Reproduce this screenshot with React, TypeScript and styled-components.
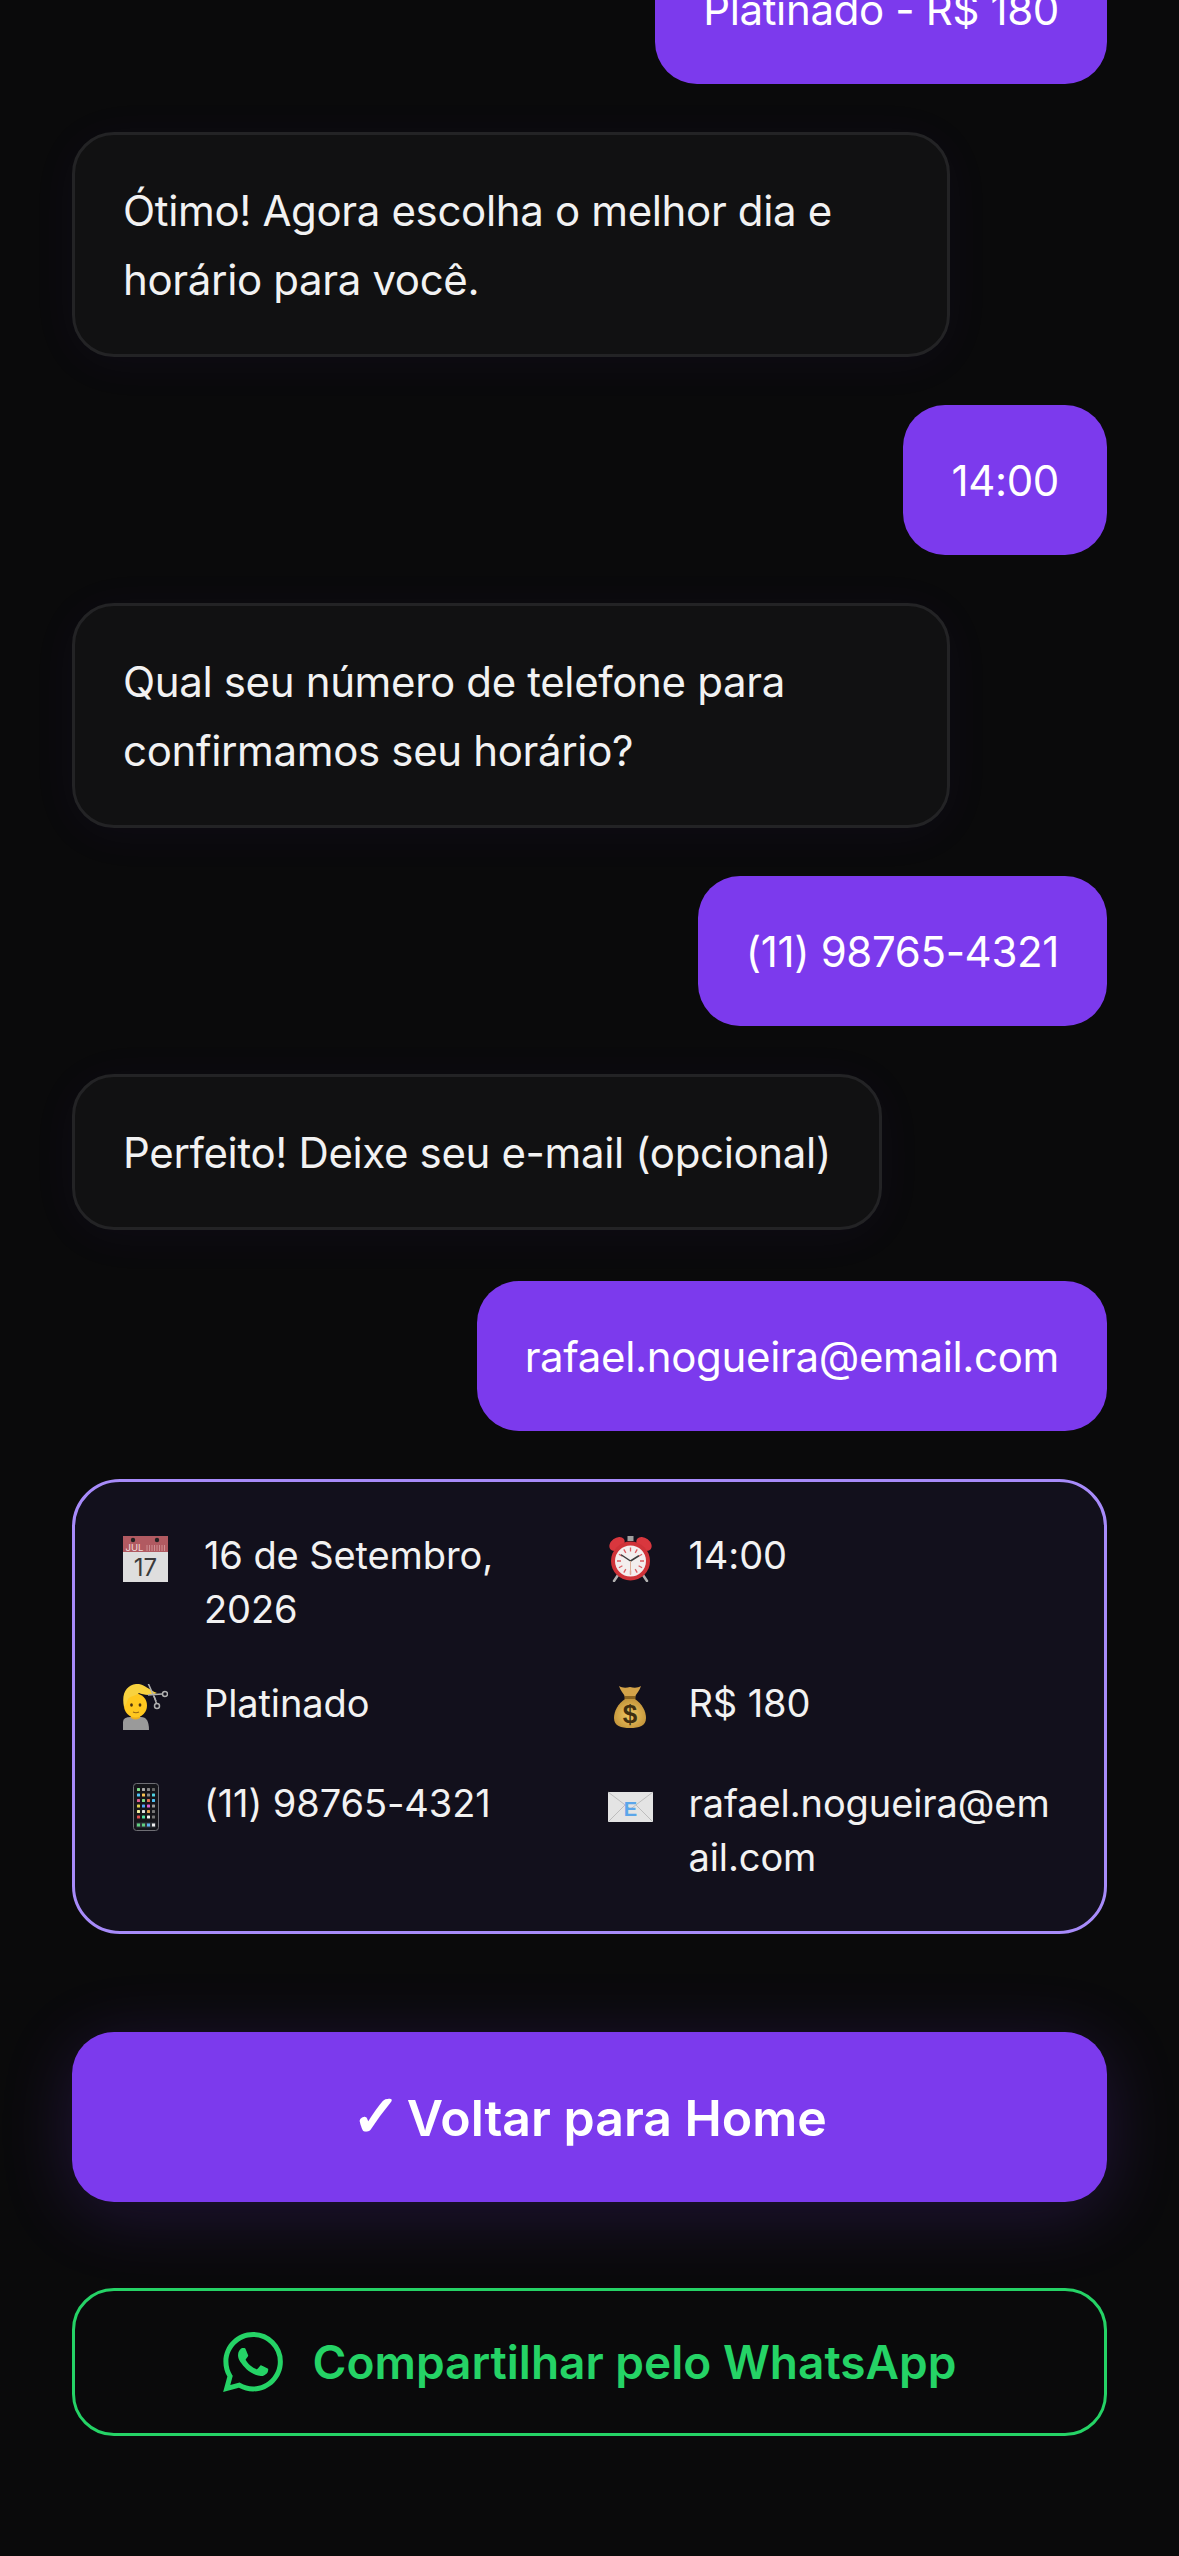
import React from "react";
import styled, { createGlobalStyle } from "styled-components";
import { SiWhatsapp } from "react-icons/si";

const Global = createGlobalStyle`
  html, body { margin: 0; padding: 0; background: #0a0a0b; }
  * { box-sizing: border-box; }
`;

const Page = styled.main`
  height: 2556px;
  overflow: hidden;
  display: flex;
  flex-direction: column;
  justify-content: flex-end;
  padding: 0 72px 120px;
  background: #0a0a0b;
  font-family: Inter, "Liberation Sans", sans-serif;
  color: #f5f5f5;
`;

const Chat = styled.section`
  display: flex;
  flex-direction: column;
  gap: 48px;
  flex-shrink: 0;
`;

const UserBubble = styled.div<{ $spaced?: boolean }>`
  align-self: flex-end;
  flex-shrink: 0;
  margin-top: ${(p) => (p.$spaced ? "3px" : "0")};
  background: #7c3aed;
  color: #fff;
  border-radius: 42px;
  padding: 40.5px 48px;
  font-size: 42px;
  font-weight: 380;
  line-height: 69px;
  letter-spacing: -0.35px;
  white-space: nowrap;
`;

const BotBubble = styled.div`
  align-self: flex-start;
  flex-shrink: 0;
  max-width: 878px;
  background: #111112;
  border: 3px solid #232325;
  border-radius: 42px;
  padding: 40.5px 48px;
  font-size: 42px;
  font-weight: 380;
  line-height: 69px;
  letter-spacing: -0.35px;
  color: #f2f2f2;
  box-shadow: 0 6px 48px rgba(124, 58, 237, 0.05);
`;

const SummaryCard = styled.section`
  background: #12101c;
  border: 3px solid #a78bfa;
  border-radius: 48px;
  padding: 46px 48px 47px;
  display: grid;
  grid-template-columns: 1fr 1fr;
  column-gap: 36px;
  row-gap: 40px;
`;

const InfoItem = styled.div`
  display: flex;
  gap: 36px;
  align-items: flex-start;
  min-height: 60px;
`;

const IconBox = styled.span`
  flex: 0 0 45px;
  width: 45px;
  height: 46px;
  margin-top: 8px;
  display: flex;
  align-items: center;
  justify-content: center;
  svg { display: block; }
`;

const InfoText = styled.span`
  font-size: 38px;
  font-weight: 380;
  line-height: 54px;
  letter-spacing: -0.1px;
  color: #f2f2f2;
  overflow-wrap: anywhere;
`;

const PrimaryButton = styled.button`
  margin-top: 98px;
  flex-shrink: 0;
  height: 170px;
  border: 0;
  border-radius: 42px;
  background: #7c3aed;
  color: #fff;
  font: 600 50px Inter, "Liberation Sans", sans-serif;
  box-shadow: 0 12px 72px rgba(124, 58, 237, 0.2);
`;

const Check = styled.span`
  font-family: "DejaVu Sans", sans-serif;
  font-size: 58px;
  line-height: 1;
  font-weight: 400;
  -webkit-text-stroke: 2px #fff;
  margin-right: 6px;
`;

const ShareButton = styled.button`
  margin-top: 86px;
  flex-shrink: 0;
  height: 148px;
  border: 3px solid #25d366;
  border-radius: 42px;
  background: transparent;
  color: #25d366;
  font: 600 46px Inter, "Liberation Sans", sans-serif;
  display: flex;
  align-items: center;
  justify-content: center;
  gap: 30px;
`;

const CalendarIcon = () => (
  <svg width="45" height="46" viewBox="0 0 45 46">
    <rect x="0" y="0" width="45" height="46" fill="#dedede" />
    <rect x="0" y="0" width="45" height="16" fill="#b15a61" />
    <circle cx="10" cy="4" r="2.2" fill="#222" />
    <circle cx="34" cy="4" r="2.2" fill="#222" />
    <text x="2.5" y="15" fontFamily="Inter, sans-serif" fontSize="9.5" fill="#f2dcdc">JUL</text>
    <path d="M24 9v6M26.5 9v6M29 9v6M31.5 9v6M34 9v6M36.5 9v6M39 9v6M41.5 9v6" stroke="#cf8f93" strokeWidth="1" />
    <text x="22.5" y="40" textAnchor="middle" fontFamily="Inter, sans-serif" fontSize="24" fill="#3a3a3a">17</text>
  </svg>
);

const BarberIcon = () => (
  <svg width="45" height="46" viewBox="0 0 45 46">
    <path d="M0 46v-8q0-5 8-5h10q8 0 8 13z" fill="#9a9a9a" />
    <path d="M8 30h9v4q-4.500 3-9 0z" fill="#eeb01e" />
    <ellipse cx="12.5" cy="21.5" rx="11.5" ry="12" fill="#ffc81f" />
    <path d="M1 23C-2 9 4 1 13 0c7-1 11 5 21 9-6 3-14 2-18 0-3 3-9 3-11 6-1 3-2 6-4 8z" fill="#f8d23f" />
    <ellipse cx="8.5" cy="21" rx="1.4" ry="1.8" fill="#4a3210" />
    <ellipse cx="17" cy="21" rx="1.4" ry="1.8" fill="#4a3210" />
    <path d="M10 28q3 1.500 6 0" stroke="#9a6a12" strokeWidth="1.2" fill="none" />
    <g stroke="#b0b0b0" fill="none" strokeWidth="1.5">
      <path d="M25-1l8 18M25 11l14-1" />
      <circle cx="42" cy="10" r="2.5" />
      <circle cx="34" cy="22" r="2.5" />
      <path d="M31 12l2.500 7.500" />
    </g>
  </svg>
);

const PhoneIcon = () => {
  const colors = ["#7fe08a", "#aaa", "#888", "#666", "#4fc3f7", "#f7c04f", "#888", "#4fd1e0", "#e05f8f", "#7fe08a", "#e0724f", "#4fc3f7", "#e0d04f", "#4fa3f7", "#e05fd0", "#999", "#f0f0a0", "#e0e0e0", "#e0a04f", "#777", "#e04f4f", "#4fe0a0", "#eee", "#777"];
  return (
    <svg width="26" height="48" viewBox="0 0 26 48">
      <rect x="0.5" y="0.5" width="25" height="47" rx="3" fill="#15151a" stroke="#6e6e74" />
      {colors.map((c, i) => (
        <rect key={i} x={4 + (i % 4) * 5} y={5 + Math.floor(i / 4) * 5.5} width="3" height="3" rx="0.6" fill={c} />
      ))}
      <rect x="3" y="39.5" width="20" height="5" rx="1" fill="#30343a" />
      <rect x="4" y="40.5" width="3" height="3" fill="#5fd080" />
      <rect x="9" y="40.5" width="3" height="3" fill="#5fd080" />
      <rect x="14" y="40.5" width="3" height="3" fill="#5fb0f0" />
      <rect x="19" y="40.5" width="3" height="3" fill="#eee" />
    </svg>
  );
};

const AlarmIcon = () => (
  <svg width="45" height="46" viewBox="0 0 45 46">
    <path d="M10 39l-4 6M35 39l4 6" stroke="#b0b0b0" strokeWidth="2.5" strokeLinecap="round" />
    <rect x="19.5" y="0" width="6" height="5" fill="#a0a0a0" />
    <ellipse cx="9" cy="8" rx="8.5" ry="6" transform="rotate(-38 9 8)" fill="#d9373e" />
    <ellipse cx="36" cy="8" rx="8.5" ry="6" transform="rotate(38 36 8)" fill="#d9373e" />
    <circle cx="22.5" cy="25" r="19.5" fill="#cf3238" />
    <circle cx="22.5" cy="25" r="15.5" fill="#f3eeee" />
    <path d="M22.5 11.5v4M22.5 34.5v4M9 25h4M32 25h4M15.8 13.4l2 3.5M29.2 13.4l-2 3.5M10.9 18.3l3.5 2M34.1 18.3l-3.5 2M10.9 31.7l3.5-2M34.1 31.7l-3.5-2M15.8 36.6l2-3.5M29.2 36.6l-2-3.5" stroke="#dc5c62" strokeWidth="1.3" />
    <path d="M22.5 25l-9-6M22.5 25l8-5" stroke="#3c3c3c" strokeWidth="1.5" strokeLinecap="round" />
    <path d="M22.5 25v13" stroke="#dcae98" strokeWidth="1" />
  </svg>
);

const MoneyBagIcon = () => (
  <svg width="32" height="44" viewBox="0 0 32 44">
    <defs>
      <radialGradient id="bag" cx="50%" cy="55%" r="62%">
        <stop offset="0%" stopColor="#f2c964" />
        <stop offset="100%" stopColor="#bd8e35" />
      </radialGradient>
    </defs>
    <path d="M5 1c3 2 7 2 11 1 4 1 8 1 11-1-1 4-5 8-6 11H11C10 9 6 5 5 1z" fill="#d3a349" />
    <path d="M10.5 11h11v3h-11z" fill="#8a6420" />
    <path d="M11 14C4 19 0 26 0 33c0 8 7 10 16 10s16-2 16-10c0-7-4-14-11-19z" fill="url(#bag)" />
    <text x="16" y="38" textAnchor="middle" fontFamily="Liberation Sans, sans-serif" fontWeight="700" fontSize="26" fill="#3f2f10">$</text>
  </svg>
);

const MailIcon = () => (
  <svg width="45" height="32" viewBox="0 0 45 32">
    <rect x="0" y="1" width="45" height="30" rx="1" fill="#e4e4e4" />
    <path d="M0 1l22.5 17L45 1M0 31l17-17M45 31L28 14" stroke="#bdbdbd" strokeWidth="1" fill="none" />
    <text x="22.5" y="25" textAnchor="middle" fontFamily="Liberation Sans, sans-serif" fontWeight="700" fontSize="20" fill="#5ba6ea">E</text>
  </svg>
);

const items: { icon: React.ReactNode; text: string }[] = [
  { icon: <CalendarIcon />, text: "16 de Setembro, 2026" },
  { icon: <AlarmIcon />, text: "14:00" },
  { icon: <BarberIcon />, text: "Platinado" },
  { icon: <MoneyBagIcon />, text: "R$ 180" },
  { icon: <PhoneIcon />, text: "(11) 98765-4321" },
  { icon: <MailIcon />, text: "rafael.nogueira@email.com" },
];

export default function App() {
  return (
    <Page>
      <Global />
      <Chat>
        <UserBubble>Platinado - R$ 180</UserBubble>
        <BotBubble>Ótimo! Agora escolha o melhor dia e horário para você.</BotBubble>
        <UserBubble>14:00</UserBubble>
        <BotBubble>Qual seu número de telefone para confirmamos seu horário?</BotBubble>
        <UserBubble>(11) 98765-4321</UserBubble>
        <BotBubble>Perfeito! Deixe seu e-mail (opcional)</BotBubble>
        <UserBubble $spaced>rafael.nogueira@email.com</UserBubble>
        <SummaryCard>
          {items.map((item) => (
            <InfoItem key={item.text}>
              <IconBox>{item.icon}</IconBox>
              <InfoText>{item.text}</InfoText>
            </InfoItem>
          ))}
        </SummaryCard>
      </Chat>
      <PrimaryButton><Check>✓</Check>Voltar para Home</PrimaryButton>
      <ShareButton><SiWhatsapp size={60} />Compartilhar pelo WhatsApp</ShareButton>
    </Page>
  );
}
